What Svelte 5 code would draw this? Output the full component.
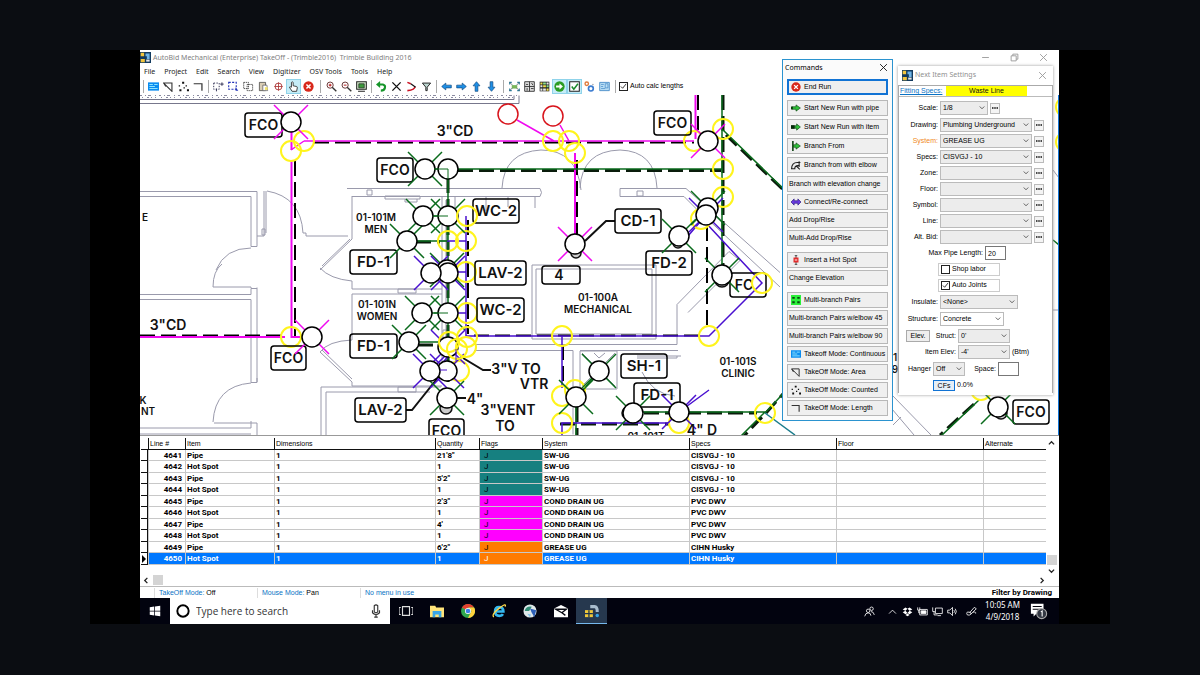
<script>
  const menus = ['File', 'Project', 'Edit', 'Search', 'View', 'Digitizer', 'OSV Tools', 'Tools', 'Help']

  // all glyphs sit on a 16 x 16 canvas
  const icons = {
    app: '<path fill="#123a5e" d="M0 0h16v16H0z"/><path fill="#f2c53d" d="M1 1h5v5H1zM1 10h6v5H1z"/><path fill="#6fb5e8" d="M8 2h6v4H8zM10 6h4v4h-4z"/><path fill="#e8e8e8" d="M9 11h5v3H9z"/>',
    cont: '<path fill="#0a8cf0" d="M0 2h16v12H0z"/><path fill="none" stroke="#8fe4ff" stroke-width="1.5" d="M2 5h5M2 8h8M9 5h5M2 11h12"/>',
    area: '<path fill="none" stroke="#333" stroke-width="1.6" d="M1 3h12v12zM1 3l3 5"/>',
    count: '<path fill="#111" d="M6 1h3v3H6zM1 6h2v2H1zM11 6h2v2h-2zM2 12h3v3H2zM8 9h2v2H8zM13 12h3v3h-3z"/>',
    len: '<path fill="none" stroke="#333" stroke-width="1.8" d="M1 4h12v10"/>',
    selAdd: '<path fill="none" stroke="#335" stroke-width="1.400" stroke-dasharray="2 2" d="M1 3h8v9H1z"/><path fill="none" stroke="#335" stroke-width="1.400" d="M13 2v5M10.500 4.500h5M5 11v4"/>',
    select: '<path fill="none" stroke="#2334b8" stroke-width="1.6" stroke-dasharray="3 2" d="M1 2h11v10H1z"/><path fill="#2334b8" d="M11 9l4 5h-4z"/>',
    copy: '<path fill="none" stroke="#444" stroke-width="1.300" stroke-dasharray="2 1" d="M1 2h7v9H1zM6 5h8v9H6z"/>',
    paste: '<path fill="#d9cdb5" stroke="#333" d="M2 2h9v12H2z"/><path fill="#fff" stroke="#555" d="M7 6h6l1 8H7z"/><path fill="#f2e36a" d="M10 9h4v4h-4z"/>',
    target: '<circle cx="8" cy="8" r="5" fill="none" stroke="#a33" stroke-width="1.3"/><path stroke="#a33" stroke-width="1.2" d="M8 2v12M2 8h12"/>',
    hand: '<path fill="#fff" stroke="#222" stroke-width="1.2" d="M5 9V2q1.500-1.500 2.500 0v5l5 1q1 0 1 2l-1 5H6L2 9q1-1 3 0z"/>',
    stop: '<circle cx="8" cy="8" r="7.500" fill="#d8281b"/><path fill="none" stroke="#fff" stroke-width="2.200" d="M5 5l6 6M11 5l-6 6"/>',
    zin: '<circle cx="6" cy="6" r="4.500" fill="#fff" stroke="#633" stroke-width="1.400"/><path fill="none" stroke="#b22" stroke-width="1.500" d="M4 6h4M6 4v4"/><path stroke="#333" stroke-width="2" d="M9 9l6 6"/>',
    zout: '<circle cx="6" cy="6" r="4.500" fill="#fff" stroke="#633" stroke-width="1.400"/><path stroke="#b22" stroke-width="1.500" d="M4 6h4"/><path stroke="#333" stroke-width="2" d="M9 9l6 6"/>',
    fit: '<path fill="#d8efd0" stroke="#222" stroke-width="1.500" d="M1 1h14v11H1zM3 15h10"/><path fill="#3c9a3c" stroke="#222" d="M4 4h8v6H4z"/>',
    undo: '<path fill="none" stroke="#16952a" stroke-width="3" d="M3 5h7q4 1 3 5-1 4-6 4"/><path fill="#16952a" d="M0 5l6-5v10z"/>',
    del: '<path stroke="#111" stroke-width="2" d="M2 2l12 12M14 2L2 14"/>',
    bend: '<path fill="none" stroke="#c12" stroke-width="2.200" d="M2 2l5 2M13 8q0 5-11 6"/><path fill="none" stroke="#111" stroke-width="1.600" d="M7 4l7 5"/>',
    filter: '<path fill="#bcd6d0" stroke="#222" stroke-width="1.400" d="M2 3h12L9 9v5H7V9z"/>',
    left: '<path fill="#1d8fe6" stroke="#124a80" d="M1 8l6-5v3h8v4H7v3z"/>',
    right: '<path fill="#1d8fe6" stroke="#124a80" d="M15 8L9 3v3H1v4h8v3z"/>',
    up: '<path fill="#1d8fe6" stroke="#124a80" d="M8 1l5 6h-3v8H6V7H3z"/>',
    down: '<path fill="#1d8fe6" stroke="#124a80" d="M8 15l5-6h-3V1H6v8H3z"/>',
    extent: '<path fill="none" stroke="#2d7d9a" stroke-width="1.600" d="M1 5V2h3M12 2h3v3M1 11v3h3M12 14h3v-3"/><path fill="#79b65a" d="M4 6h8v5H4z"/><path stroke="#345" d="M1 2l4 4M15 2l-4 4M1 14l4-4M15 14l-4-4"/>',
    calc: '<path fill="#ddd" stroke="#333" stroke-width="1.300" d="M1 1h14v14H1zM8 1v14M1 8h14M3 5h3M10 11h4M4.500 10v4M11 3l2 3"/>',
    grid: '<path fill="#222" d="M1 1h14v14H1z"/><path fill="#f3e04a" d="M2 2h3v3H2zM6 6h4v3H6zM11 11h3v3h-3z"/><path fill="#8de08a" d="M6 2h4v3H6zM11 6h3v3h-3z"/><path fill="#e8e8e8" d="M11 2h3v3h-3zM2 6h3v3H2zM6 11h4v3H6zM2 11h3v3H2z"/>',
    go: '<circle cx="8" cy="8" r="7.500" fill="#2b9c22"/><path fill="#fff" d="M3 6.500h5V3.500L13 8l-5 4.500v-3H3z"/>',
    check: '<path fill="#fff" stroke="#222" stroke-width="1.500" d="M1 1h14v14H1z"/><path fill="none" stroke="#1b8a2b" stroke-width="2.200" d="M4 8l3 4 6-8"/>',
    gears: '<circle cx="4" cy="4" r="2.500" fill="none" stroke="#e07a3c" stroke-width="2"/><circle cx="10" cy="11" r="3.500" fill="none" stroke="#3c7cd0" stroke-width="2.400"/><circle cx="13" cy="5" r="1" fill="#999"/>',
    note: '<path fill="#b9def5" stroke="#3d84c4" stroke-width="1.200" d="M1 2h14v12H1z"/><path fill="none" stroke="#3d84c4" d="M3 5h4M3 8h3M3 11h6M9 4h4v6H9z"/>',
    runPipe: '<path fill="#2fc23a" stroke="#083d0c" d="M1 6h7V3l7 5-7 5v-3H1z"/><path fill="#083d0c" d="M0 6h3v4H0z"/>',
    runItem: '<path fill="#2fc23a" stroke="#083d0c" d="M6 6h3V3l6 5-6 5v-3H6z"/><path fill="#052a08" d="M0 5h6v6H0z"/>',
    branch: '<path stroke="#083d0c" stroke-width="2.500" d="M3 0v16"/><path fill="#2fc23a" stroke="#083d0c" d="M4 6h4V3l7 5-7 5v-3H4z"/>',
    elbow: '<path fill="none" stroke="#222" stroke-width="1.700" d="M1 14q0-10 9-10h5M6 14q0-5 5-5h3M0 14h7M13 2v9M9 10l5 5"/>',
    connect: '<path fill="#6a3be0" stroke="#22107a" d="M0 8l5-5v3h6V3l5 5-5 5v-3H5v3z"/>',
    hotspot: '<path fill="none" stroke="#444" stroke-width="1.500" d="M6 1h4M6 15h4M8 1v14"/><path fill="#e02b2b" d="M4 4h8v8H4z"/><path stroke="#fff" stroke-width="1.500" d="M6 8h4"/>',
    pairs: '<path fill="#2bf03a" d="M0 0h16v16H0z"/><path fill="#0b4a10" d="M2 3h4v3H2zM10 3h4v3h-4zM2 10h4v3H2zM10 10h4v3h-4z"/>'
  }

  const toolGroups = [
    { sep: 6, items: ['cont', 'area', 'count', 'len'] },
    { sep: 5, items: ['selAdd', 'select', 'copy', 'paste', 'target', 'hand', 'stop'] },
    { sep: 8, items: ['zin', 'zout', 'fit'] },
    { sep: 5, items: ['undo', 'del', 'bend', 'filter'] },
    { sep: 5, items: ['left', 'right', 'up', 'down'] },
    { sep: 8, items: ['extent', 'calc', 'grid', 'go', 'check', 'gears', 'note'] }
  ]
  const pressed = ['hand', 'go', 'check']

  const commandGroups = [
    [['End Run', 'stop']],
    [['Start New Run with pipe', 'runPipe'], ['Start New Run with item', 'runItem'], ['Branch From', 'branch'], ['Branch from with elbow', 'elbow']],
    [['Branch with elevation change'], ['Connect/Re-connect', 'connect'], ['Add Drop/Rise'], ['Multi-Add Drop/Rise']],
    [['Insert a Hot Spot', 'hotspot'], ['Change Elevation']],
    [['Multi-branch Pairs', 'pairs'], ['Multi-branch Pairs w/elbow 45'], ['Multi-branch Pairs w/elbow 90'], ['Takeoff Mode: Continuous', 'cont'], ['TakeOff Mode: Area', 'area'], ['TakeOff Mode: Counted', 'count'], ['TakeOff Mode: Length', 'len']]
  ]

  const fields = [
    ['Drawing:', 'Plumbing Underground'],
    ['System:', 'GREASE UG'],
    ['Specs:', 'CISVGJ - 10'],
    ['Zone:', ''],
    ['Floor:', ''],
    ['Symbol:', ''],
    ['Line:', ''],
    ['Alt. Bid:', '']
  ]

  const columns = ['Line #', 'Item', 'Dimensions', 'Quantity', 'Flags', 'System', 'Specs', 'Floor', 'Alternate']
  const rows = [
    [4641, 'Pipe', "21'8\"", 'teal', 'SW-UG', 'CISVGJ - 10'],
    [4642, 'Hot Spot', '1', 'teal', 'SW-UG', 'CISVGJ - 10'],
    [4643, 'Pipe', "5'2\"", 'teal', 'SW-UG', 'CISVGJ - 10'],
    [4644, 'Hot Spot', '1', 'teal', 'SW-UG', 'CISVGJ - 10'],
    [4645, 'Pipe', "2'3\"", 'pink', 'COND DRAIN UG', 'PVC DWV'],
    [4646, 'Hot Spot', '1', 'pink', 'COND DRAIN UG', 'PVC DWV'],
    [4647, 'Pipe', "4'", 'pink', 'COND DRAIN UG', 'PVC DWV'],
    [4648, 'Hot Spot', '1', 'pink', 'COND DRAIN UG', 'PVC DWV'],
    [4649, 'Pipe', "6'2\"", 'orange', 'GREASE UG', 'CIHN Husky'],
    [4650, 'Hot Spot', '1', 'orange', 'GREASE UG', 'CIHN Husky']
  ]
  let selected = $state(4650)

  // fittings on the plan: x, y, spoke colour
  const M = '#f00af0', G = '#0a6b1c', P = '#4a10d0'
  const fittings = [
    [291, 122, M], [425, 169, G], [448, 169, ''], [423, 216, G], [448, 216, G], [407, 241, G],
    [447, 270, G], [448, 273, P], [431, 273, P], [422, 313, G], [448, 313, G], [312, 337, M], [448, 347, P],
    [409, 342, G], [447, 371, P], [430, 371, P], [447, 398, G], [708, 208, G], [706, 215, P],
    [708, 141, M], [575, 244, M], [679, 236, G], [722, 275, G], [599, 371, G], [576, 397, G],
    [633, 413, G], [679, 412, P], [998, 407, G]
  ]
  const joints = [
    [304, 141], [291, 151], [553, 141], [569, 141], [575, 153], [694, 141], [723, 129], [723, 169],
    [723, 197], [701, 219], [466, 241], [466, 272], [467, 313], [291, 337],
    [459, 371], [562, 336], [709, 336], [575, 390],
    [562, 396], [562, 423], [679, 423], [765, 413], [981, 390], [1066, 107], [1066, 142]
  ]
  // joints that lie over the fittings and tags
  const topJoints = [[762, 283], [467, 216], [448, 241], [449, 342], [457, 349], [467, 337], [466, 347]]
  const tags = [
    [245, 113, 37, 'FCO'], [377, 158, 36, 'FCO'], [654, 111, 37, 'FCO'], [271, 346, 35, 'FCO'],
    [429, 419, 35, 'FCO'], [1013, 400, 36, 'FCO'], [350, 250, 47, 'FD-1'], [350, 334, 47, 'FD-1'],
    [473, 199, 46, 'WC-2'], [477, 298, 47, 'WC-2'], [475, 261, 51, 'LAV-2'], [355, 398, 51, 'LAV-2'],
    [615, 209, 46, 'CD-1'], [646, 251, 46, 'FD-2'], [621, 354, 46, 'SH-1'], [634, 383, 46, 'FD-1']
  ]
</script>

{#snippet icon(name)}
  <svg class="icon" viewBox="0 0 16 16" aria-hidden="true">{@html icons[name]}</svg>
{/snippet}

{#snippet more(name)}
  <button class="more" aria-label="More for {name}"><svg viewBox="0 0 8 2"><path d="M0 0h2v2H0zM3 0h2v2H3zM6 0h2v2H6z" /></svg></button>
{/snippet}

<div class="page">
  <div class="frame">
    <main class="desktop">
      <header class="title">
        {@render icon('app')}
        <h1>AutoBid Mechanical (Enterprise) TakeOff - (Trimble2016)&nbsp; Trimble Building 2016</h1>
        <div class="winctl">
          <button aria-label="Minimize"><svg viewBox="0 0 8 8"><path d="M1 4h6" /></svg></button>
          <button aria-label="Restore"><svg viewBox="0 0 8 8"><path d="M1 2.500h4.500V7H1zM2.500 2.500V1H7v4.500H5.500" /></svg></button>
          <button aria-label="Close"><svg viewBox="0 0 8 8"><path d="M1 1l6 6M7 1L1 7" /></svg></button>
        </div>
      </header>
      <nav class="menu">
        {#each menus as m}<button>{m}</button>{/each}
      </nav>
      <div class="toolbar" role="toolbar" aria-label="Takeoff tools">
        {#each toolGroups as group}
          <span class="sep" style="width: {group.sep}px"></span>
          {#each group.items as name}
            <button class:on={pressed.includes(name)} aria-label={name}>{@render icon(name)}</button>
          {/each}
        {/each}
        <span class="sep last"></span>
        <label class="tick"><input type="checkbox" checked />Auto calc lengths</label>
      </div>

      <svg class="plan" viewBox="140 95 919 340" preserveAspectRatio="xMinYMin slice" role="img" aria-label="Plumbing plan">
        <!-- masonry band -->
        <g fill="none" stroke="#8a8aa0">
          <path stroke-dasharray="2 3 1 2 3 4 1 3" d="M140 95.500h378" />
          <path stroke-dasharray="1 4 2 2 1 3 1 5" d="M142 97.500h372" />
          <path stroke="#77778c" d="M140 99.500h374M140 103.500h379v-8M514 99.500v-4" />
        </g>

        <!-- walls and doors -->
        <g class="wall">
          <path d="M140 191.500h117v55h-6v-50H140M140 294.500h111v-6h6M251 288v-1h-38M251 299.500H140M251 299.500v83h6v-95M251 421v7H140M257 435v-12h-43M140 434h111M257 382v-4" />
          <path d="M264 191v45h-7M266 191v42M262 229h3v6h-3zM216 270q9-22 35-22M213 287q0-16 9-23M251 383q-36 3-38 39M267 191q34 6 36 42h3v3h42" />
          <path d="M347 188.500h193q3 4 0 8H352M352 196v43l-32 31M350 239l-28 27M385 196h35v3h-35zM367 190h5v5h-5zM405 199v3h12v-3M320 268q10 11 32 13v8h90M352 294h90M352 294v46q-24 1-32 12l32 30v4h90M322 350l30 29M398 289h18v4h-18zM398 387h18v5h-18zM321 435v-48h120M326 435v-43h104M442 196v178M446 200v170M443 210h4v12h-4zM443 330h4v12h-4z" />
          <path d="M455 196v15M486 197v14M508 197v10M535 197v11M502 188q2-36 39-38 36 0 40 40M580 188q2-37 40-38 35 1 37 38M620 188.500h66l94 84M620 188.500v8h64l16 16M637 191h6v5h-6z" />
          <path d="M532 265h124v74H532zM536 269h116v65H536zM474 344.500h203v-40l52-53 11 9-52 52M474 350.500h99v84M580 350.500h98M580 351h37v38h-37zM582 353l33 33M615 353l-33 33M594 353l5 5 6-5M637 356h44M637 358h40v-2M642 372q10 22 33 24M700 212l80 75" />
          <path d="M892 395l39 40M892 409l22 26M901 417l-8 8M1046 96v240M1050 100v294M1053 310h6M1053 170l6 8" />
        </g>

        <!-- hidden pipe runs, drawn as dashes -->
        <g class="dash">
          <path d="M314 142.500h380M295 161v175M140 335.500h142M698 95v35M577 160v75M707 226v100M474 335.500h230M563 345v42" />
          <path class="heavy" d="M458 170.500h263M723 95v190M726 135l70 67M448 178v220M644 413h113M416 242h24M418 345h20M560 424h110M577 407v28M974 404l-34 31M790 386l-24 27-22 23" />
          <path d="M468 220v114" />
        </g>

        <g fill="none" stroke-width="1.500">
          <path stroke={M} stroke-width="2" d="M291.500 130v20M291.500 160v177h14M140 337h145M575 153v84M695.500 95v44" />
          <path stroke={M} d="M304 141h390M517 120l37 21M560 125l9 16M291 150l13-9" />
          <path stroke={G} d="M425 169h23v200M448 169h275M722 95v190M723 130l73 71M407 241h40M423 216h25M422 313h26M418 342h30M643 412h122l-26 26M765 413l28-30M577 397l22-26M576 405v30M979 400l-38 36M1053 60l8 6M1053 240l6 5" />
          <path stroke={P} d="M447 241h19M431 272h35M448 313h18M466 216v120h243l53-53-56-60M562 336v52M562 435v-12h107M706 215l-24 28M455 349l-20 22M679 412l30-22" />
          <path stroke="#1a7c8c" d="M765 413l30 22" />
          <path stroke="#111" stroke-width="2" d="M585 241l21-20h9M406 410h6l28-35M466 398h-9M491 370h-8l-20-12" />
        </g>

        {#each joints as [x, y]}
          <circle class="joint" cx={x} cy={y} r="10" />
        {/each}

        {#each tags as [x, y, w, text]}
          <rect class="tag" {x} {y} width={w} height="24" rx="3" />
          <text class="cad" class:wide={w > 40} x={x + w / 2} y={y + 17}>{text}</text>
        {/each}
        <rect class="tag" x="542" y="266" width="38" height="18" rx="3" />
        <text class="cad" x="559" y="280">4</text>
        <rect class="tag" x="730" y="273" width="36" height="24" rx="3" />
        <text class="cad" x="744" y="290">FC</text>

        <circle class="drop" cx="576" cy="253" r="5" />
        <circle class="drop" cx="678" cy="243" r="5" />
        <circle class="drop" cx="722" cy="280" r="7" />
        <circle class="drop" cx="446" cy="408" r="6" />
        <circle class="drop" cx="628" cy="413" r="6" />
        <circle class="drop" cx="1001" cy="413" r="6" />
        {#each fittings as [x, y, colour]}
          {#if colour}
            <path stroke={colour} stroke-width="1.500" d="M{x - 17} {y - 17}l34 34M{x + 17} {y - 17}l-34 34" />
          {/if}
        {/each}
        {#each fittings as [x, y]}
          <circle class="fitting" cx={x} cy={y} r="10" />
        {/each}
        {#each topJoints as [x, y]}
          <circle class="joint" cx={x} cy={y} r="10" />
        {/each}
        <path fill="none" stroke={G} d="M434 169h14v10M433 216h15M434 313h14M447 232v9h-8" />
        <path fill="none" stroke={P} d="M440 370h7M456 361v-12" />
        <circle class="riser" cx="508" cy="114" r="10" />
        <circle class="riser" cx="553" cy="116" r="10" />

        <g class="cad">
          <text x="455" y="136">3"CD</text>
          <text x="168" y="330">3"CD</text>
          <text x="516" y="374">3"V TO</text>
          <text x="534" y="389">VTR</text>
          <text x="475" y="404">4"</text>
          <text x="508" y="415">3"VENT</text>
          <text x="505" y="431">TO</text>
          <text x="702" y="435">4" D</text>
        </g>
        <g class="room">
          <text x="376" y="221">01-101M</text>
          <text x="376" y="233">MEN</text>
          <text x="377" y="308">01-101N</text>
          <text x="377" y="320">WOMEN</text>
          <text x="598" y="301">01-100A</text>
          <text x="598" y="313">MECHANICAL</text>
          <text x="738" y="365">01-101S</text>
          <text x="738" y="377">CLINIC</text>
          <text x="646" y="440">01-101T</text>
          <text x="145" y="221">E</text>
          <text x="143" y="404">K</text>
          <text x="148" y="415">NT</text>
          <text x="895" y="361">1</text>
          <text x="895" y="373">9</text>
        </g>
        <path stroke="#1173d4" d="M1058.500 95v340" />
      </svg>

      <section class="grid">
        <table>
          <thead>
            <tr>
              <th class="mark"></th>
              {#each columns as c}<th class={c.toLowerCase().replace(' #', '')}>{c}</th>{/each}
            </tr>
          </thead>
          <tbody>
            {#each rows as [id, item, qty, flag, system, specs]}
              <tr class:selected={id === selected} onclick={() => (selected = id)}>
                <td class="mark">{#if id === selected}<svg viewBox="0 0 4 8"><path d="M0 0l4 4-4 4z" /></svg>{/if}</td>
                <td class="num">{id}</td>
                <td>{item}</td>
                <td>1</td>
                <td>{qty}</td>
                <td class="flag {flag}">J</td>
                <td>{system}</td>
                <td>{specs}</td>
                <td></td>
                <td></td>
              </tr>
            {/each}
          </tbody>
        </table>
        <div class="vscroll">
          <svg viewBox="0 0 8 8"><path d="M1 5l3-3 3 3" /></svg>
          <span class="thumb"></span>
          <svg viewBox="0 0 8 8"><path d="M1 3l3 3 3-3" /></svg>
        </div>
      </section>
      <div class="hscroll">
        <svg viewBox="0 0 8 8"><path d="M5 1L2 4l3 3" /></svg>
        <span class="thumb"></span>
        <svg class="end" viewBox="0 0 8 8"><path d="M3 1l3 3-3 3" /></svg>
      </div>
      <footer class="status">
        <span><i>TakeOff Mode:</i> Off</span>
        <span><i>Mouse Mode:</i> Pan</span>
        <span><i>No menu in use</i></span>
        <b>Filter by Drawing</b>
      </footer>

      <div class="taskbar">
        <button class="start" aria-label="Start"><svg viewBox="0 0 16 16"><path fill="#fff" d="M1 3l6-1v5.500H1zM8 2l7-1v6.500H8zM1 8.500h6V14l-6-1zM8 8.500h7V15l-7-1z" /></svg></button>
        <label class="search">
          <svg viewBox="0 0 16 16"><circle cx="8" cy="8" r="6.500" fill="none" stroke="#000" stroke-width="2.200" /></svg>
          <input type="text" placeholder="Type here to search" aria-label="Type here to search" />
          <svg viewBox="0 0 16 16"><path fill="none" stroke="#333" stroke-width="1.300" d="M6 2q2-2 4 0v7q-2 2-4 0zM4 7v3q4 4 8 0V7M8 12v3M6 15h4" /></svg>
        </label>
        <button aria-label="Task view"><svg viewBox="0 0 16 16"><path fill="none" stroke="#ddd" stroke-width="1.300" d="M4 3h8v10H4zM2 4H0v8h2M14 4h2v8h-2" /></svg></button>
        <button aria-label="File Explorer"><svg viewBox="0 0 16 16"><path fill="#ffe47a" d="M0 2h6l1 2h9v11H0z" /><path fill="#3aa7e8" d="M3 8h10v7h-3v-3H6v3H3z" /></svg></button>
        <button aria-label="Chrome"><svg viewBox="0 0 16 16"><circle cx="8" cy="8" r="8" fill="#2fa84f" /><path fill="#e2402f" d="M1 4a8 8 0 0114 0H8v4z" /><path fill="#ffd23c" d="M15 4a8 8 0 01-7 12l4-8-4-4z" /><circle cx="8" cy="8" r="3.500" fill="#fff" /><circle cx="8" cy="8" r="2.700" fill="#3b7fe8" /></svg></button>
        <button aria-label="Internet Explorer"><svg viewBox="0 0 16 16"><path fill="none" stroke="#35b8f0" stroke-width="3" d="M4 8.500h9q0-5-5-5-4.500 0-4.500 5t5 5q3 0 4-2" /><path fill="none" stroke="#ffd84a" stroke-width="1.500" d="M2 15Q-1 12 8 5t7-2" /></svg></button>
        <button aria-label="Browser"><svg viewBox="0 0 16 16"><circle cx="8" cy="8" r="7.500" fill="#dfe8ea" /><path fill="#2f8a74" d="M2 8q1-6 8-5l-3 5z" /><path fill="#2d5fb8" d="M8 5l7 2-2 8-3-5z" /><path fill="#7fc4ef" d="M5 11l4 1-1 3z" /></svg></button>
        <button aria-label="Mail"><svg viewBox="0 0 16 16"><path fill="#fff" d="M0 5l8-4 8 4v10H0z" /><path fill="none" stroke="#05060f" stroke-width="1.500" d="M2 6h12l-5 4zM9 10l4 3" /></svg></button>
        <button class="active" aria-label="AutoBid"><svg viewBox="0 0 16 16"><path fill="#f0c83a" d="M0 7h9v8H0z" /><path stroke="#1d3550" stroke-width="1.500" d="M4.500 7v8M0 11h9" /><path fill="none" stroke="#a8bccd" stroke-width="3.500" d="M6 3h5q3 0 3 6" /><circle cx="14" cy="13" r="2" fill="#34a5e8" /></svg></button>
        <div class="tray">
          <svg class="people" viewBox="0 0 16 16"><circle cx="6" cy="7" r="2.500" /><circle cx="11" cy="4" r="2.500" /><path d="M1 15q1-5 5-5t4 4M10 8q4 0 5 5" /></svg>
          <svg viewBox="0 0 16 16"><path d="M3 11l5-5 5 5" /></svg>
          <svg viewBox="0 0 16 16"><path fill="#fff" stroke="none" d="M5 2l3 2-3 3-4-2zM11 2l4 3-4 2-3-3zM5 7l3 3-3 2-4-3zM11 7l4 2-4 3-3-2zM5 13l3-2 3 2-3 2z" /></svg>
          <svg viewBox="0 0 16 16"><path d="M4 5h11v8H4zM1 2v4h3V2M2.500 6v4H4" /><path fill="#fff" d="M6 7h7v4H6z" /></svg>
          <svg viewBox="0 0 16 16"><path d="M5 3h10v8H5zM8 14h5M1 2v6h3M3 8v5h5" /></svg>
          <svg viewBox="0 0 16 16"><path d="M1 6h3l4-4v12l-4-4H1zM10 6q2 2 0 4M12 4q3 4 0 8" /></svg>
          <svg class="pen" viewBox="0 0 16 16"><path d="M2 13q-3-5 3-4 4 1 2 3T2 13M5 10L12 2l3 2-8 8M10 9q5-1 4 2" /></svg>
          <time><span>10:05 AM</span><span>4/9/2018</span></time>
          <svg class="notice" viewBox="0 0 20 20"><path fill="#fff" stroke="none" d="M1 2h14v11H7l-3 3v-3H1z" /><path stroke="#05060f" d="M3 5h10M3 8h10" /><circle cx="13" cy="13" r="5.500" fill="#333843" stroke="#aaa" /><path d="M12 11l1.500-1v6" /></svg>
        </div>
      </div>

      <section class="window commands">
        <h2>Commands <button aria-label="Close commands"><svg viewBox="0 0 8 8"><path d="M1 1l6 6M7 1L1 7" /></svg></button></h2>
        {#each commandGroups as group}
          <div class="group">
            {#each group as [label, name]}
              <button class="cmd" class:primary={label === 'End Run'}>
                {#if name}{@render icon(name)}{/if}{label}
              </button>
            {/each}
          </div>
        {/each}
      </section>

      <section class="window settings">
        <h2>{@render icon('app')} Next Item Settings <button aria-label="Close settings"><svg viewBox="0 0 8 8"><path d="M1 1l6 6M7 1L1 7" /></svg></button></h2>
        <div class="body">
          <div class="spec"><a href="#specs">Fitting Specs:</a><mark>Waste Line</mark></div>
          <div class="row scale">
            <label for="scale">Scale:</label>
            <select id="scale"><option>1/8</option></select>
            {@render more('scale')}
          </div>
          {#each fields as [label, value], i}
            <div class="row">
              <label for="f{i}" class:warn={label === 'System:'}>{label}</label>
              <select id="f{i}" class="full"><option>{value}</option></select>
              {@render more(label)}
            </div>
          {/each}
          <div class="row"><label class="long" for="maxlen">Max Pipe Length:</label><input id="maxlen" type="text" value="20" /></div>
          <div class="row"><label class="tick boxed"><input type="checkbox" />Shop labor</label></div>
          <div class="row"><label class="tick boxed"><input type="checkbox" checked />Auto Joints</label></div>
          <div class="row tall"><label for="ins">Insulate:</label><select id="ins" class="mid"><option>&lt;None&gt;</option></select></div>
          <div class="row tall"><label for="struct">Structure:</label><select id="struct" class="plain"><option>Concrete</option></select></div>
          <div class="row tall"><button class="elev">Elev.</button><label class="half" for="selev">Struct:</label><select id="selev" class="short"><option>0'</option></select></div>
          <div class="row"><label class="ielev" for="ielev">Item Elev:</label><select id="ielev" class="short"><option>-4'</option></select><span>(Btm)</span></div>
          <div class="row tall"><label class="hang" for="hang">Hanger</label><select id="hang" class="tiny"><option>Off</option></select><label for="space">Space:</label><input id="space" type="text" /></div>
          <div class="row cf"><button>CFs</button><span>0.0%</span></div>
        </div>
      </section>
    </main>
  </div>
</div>

<style>
  :global(body) { background: #0b0d12; }
  .page { min-height: 100vh; box-sizing: border-box; padding: 50px 90px; font: 7px/10px "Liberation Sans", Arial, sans-serif; color: #000; }
  .frame { background: #000; padding: 0 51px 0 50px; }
  .desktop { position: relative; background: #fff; display: flex; flex-direction: column; }
  button, input, select { font: inherit; color: inherit; margin: 0; padding: 0; border: 0; border-radius: 0; background: none; box-sizing: border-box; }
  h1, h2 { margin: 0; font-size: inherit; font-weight: normal; }
  svg { display: block; flex: none; }
  .icon { width: 11px; height: 11px; }

  .title { display: flex; align-items: center; gap: 2px; height: 15px; font-family: "Noto Sans", "Open Sans", sans-serif; color: #808080; }
  .winctl { margin-left: auto; margin-right: 11px; display: flex; gap: 20px; }
  .winctl svg, h2 button svg { width: 9px; height: 9px; fill: none; stroke: #999; stroke-width: 0.8; }
  .menu { display: flex; gap: 9px; height: 13px; padding-left: 4px; align-items: center; font-family: "Noto Sans", "Open Sans", sans-serif; color: #222; }
  .toolbar { display: flex; align-items: center; height: 17px; padding-bottom: 1px; box-sizing: border-box; }
  .toolbar button { width: 15px; height: 15px; display: flex; align-items: center; justify-content: center; }
  .toolbar .on { background: #c5ecf7; box-shadow: inset 0 0 0 1px #8fd3ea; }
  .sep { height: 13px; background: linear-gradient(#aaa, #aaa) center / 1px 100% no-repeat; }
  .sep.last { width: 7px; }
  .tick { display: flex; align-items: center; gap: 2px; }
  .tick input { appearance: none; width: 9px; height: 9px; border: 1px solid #222; background: #fff; }
  .tick input:checked { background: url("data:image/svg+xml,%3Csvg xmlns='http://www.w3.org/2000/svg' viewBox='0 0 8 8'%3E%3Cpath d='M1 4l2 2 4-5' fill='none' stroke='%23222'/%3E%3C/svg%3E") center / 7px no-repeat #fff; }

  .plan { width: 100%; height: 340px; background: #fff; }
  .wall { fill: none; stroke: #9a9aac; stroke-width: 1; }
  .dash { fill: none; stroke: #000; stroke-width: 2; stroke-dasharray: 15 6; }
  .dash .heavy { stroke-width: 3; stroke: #0a1c0c; }
  .joint { fill: none; stroke: #fff41c; stroke-width: 2; }
  .fitting { fill: #fff; stroke: #000; stroke-width: 1.5; }
  .drop { fill: #ccc; stroke: #111; stroke-width: 1.5; }
  .riser { fill: none; stroke: #d8141c; stroke-width: 1.5; }
  .tag { fill: none; stroke: #000; stroke-width: 1.5; }
  .cad { font: 600 14px Inter, sans-serif; text-anchor: middle; fill: #111; }
  .cad.wide { font-size: 15px; }
  .room { font: 600 10px Inter, sans-serif; text-anchor: middle; fill: #111; }

  .grid { display: flex; border-top: 1px solid #999; padding: 2px 2px 0 1px; }
  table { flex: 1; min-width: 0; table-layout: fixed; border-collapse: separate; border-spacing: 0; font: bold 8px/10px Roboto, sans-serif; }
  th { height: 12px; padding: 0 0 0 1px; box-sizing: border-box; text-align: left; font: 7px/10px "Liberation Sans", sans-serif; border-left: 1px solid #111; border-bottom: 1px solid #111; }
  td { height: 11px; padding: 0 0 0 1px; box-sizing: border-box; line-height: 9px; border-left: 1px solid #c8c8c8; border-bottom: 1px solid #c8c8c8; white-space: nowrap; }
  tr:nth-child(even) td { height: 12px; }
  th.mark { width: 7px; border-left: 0; }
  td.mark { border-left: 0; border-bottom-color: #111; border-right: 1px solid #111; }
  td.mark svg { width: 4px; height: 8px; fill: #000; }
  .line { width: 37px; }
  .item { width: 89px; }
  .dimensions { width: 161px; }
  .quantity { width: 44px; }
  .flags { width: 63px; }
  .system, .specs, .floor { width: 147px; }
  .num { text-align: right; padding-right: 3px; }
  .flag { padding-left: 4px; font-weight: normal; }
  .teal { background: #168080; }
  .pink { background: #ff00ff; }
  .orange { background: #ff7b00; }
  .selected td:not(.flag, .mark) { background: #0078ff; }
  .selected td { color: #fff; }
  .vscroll { width: 11px; padding-top: 2px; display: flex; flex-direction: column; align-items: center; }
  .vscroll svg, .hscroll svg { width: 7px; height: 7px; fill: none; stroke: #222; stroke-width: 1.5; }
  .thumb { width: 10px; height: 10px; background: #d4d4d4; }
  .vscroll .thumb { margin-top: auto; }
  .vscroll svg:last-child { margin-bottom: -9px; margin-top: 2px; }
  .hscroll { display: flex; align-items: center; gap: 3px; height: 12px; margin-top: 9px; padding: 0 14px 0 3px; }
  .hscroll .end { margin-left: auto; }
  .status { display: flex; align-items: center; height: 11px; border-top: 1px solid #bbb; padding: 0 7px 0 14px; }
  .status span { width: 98px; padding-left: 4px; border-left: 1px solid #ddd; }
  .status i { font-style: normal; color: #0a72c4; }
  .status b { margin-left: auto; font: bold 8px/10px Roboto, sans-serif; }

  .taskbar { display: flex; height: 26px; background: #02030f; color: #fff; }
  .taskbar > button { width: 31px; display: flex; align-items: center; justify-content: center; }
  .taskbar > button svg { width: 14px; height: 14px; }
  .taskbar .start { width: 30px; }
  .taskbar .start svg { width: 12px; height: 12px; }
  .taskbar .active { background: #26384e; border-bottom: 1px solid #76b9ed; }
  .search { width: 220px; box-sizing: border-box; display: flex; align-items: center; gap: 6px; padding: 0 7px 0 6px; background: #fff; }
  .search svg { width: 14px; height: 14px; }
  .search input { flex: 1; min-width: 0; font: 10px/14px "Open Sans", sans-serif; }
  .search input::placeholder { color: #333; opacity: 1; }
  .tray { margin-left: auto; display: flex; align-items: center; gap: 4px; padding-right: 11px; }
  .tray svg { width: 11px; height: 11px; fill: none; stroke: #fff; stroke-width: 1.2; }
  .tray .people { margin-right: 8px; }
  .tray .pen { margin-left: 4px; }
  .tray time { display: flex; flex-direction: column; align-items: center; margin: 0 6px 0 4px; font: 8px/12px "Noto Sans", sans-serif; }
  .tray .notice { width: 18px; height: 18px; }

  /* floating tool windows */
  .window { position: absolute; box-sizing: border-box; background: #fff; }
  .window h2 { display: flex; align-items: center; gap: 2px; font-family: "Noto Sans", "Open Sans", sans-serif; }
  .window h2 button { margin-left: auto; }
  .commands { top: 9px; right: 166px; width: 111px; height: 362px; border: 1px solid #2b93cf; padding: 0 4px; background: #fbfbfb; }
  .commands h2 { height: 15px; margin: 0 0 4px -2px; font-size: 7px; }
  .commands h2 button svg { stroke: #111; }
  .group { display: flex; flex-direction: column; gap: 2px; margin-bottom: 6px; }
  .group:nth-of-type(1) { margin-bottom: 5px; }
  .group:nth-of-type(2) { gap: 3px; margin-bottom: 3px; }
  .cmd { height: 16px; display: flex; align-items: center; gap: 3px; padding: 0 1px; border: 1px solid #b8b8b8; background: #efefef; white-space: nowrap; }
  .cmd .icon { margin-left: 2px; width: 10px; height: 10px; }
  .cmd.primary { border: 2px solid #1173d4; padding: 0; }
  .settings { top: 16px; right: 6px; width: 155px; height: 329px; box-shadow: 0 0 3px #999; }
  .settings h2 { height: 18px; padding: 0 6px 0 4px; font-size: 7px; color: #909090; }
  .body { border: 1px solid #aaa; border-width: 1px 1px 0 1px; margin-top: 1px; }
  .spec { display: flex; gap: 3px; height: 10px; border-bottom: 1px solid #bbb; }
  .spec a { color: #0a72c4; padding-left: 1px; width: 43px; white-space: nowrap; }
  mark { width: 81px; background: #ff0; text-align: center; color: #111; }
  .row { display: flex; align-items: center; gap: 2px; height: 16px; white-space: nowrap; }
  .row label { width: 39px; text-align: right; }
  .row .warn { color: #f08a1c; }
  .scale { height: 18px; margin-top: 2px; }
  select { appearance: none; height: 14px; width: 48px; padding: 0 2px; border: 1px solid #bbb; background: url("data:image/svg+xml,%3Csvg xmlns='http://www.w3.org/2000/svg' viewBox='0 0 8 8'%3E%3Cpath d='M1 2l3 3 3-3' fill='none' stroke='%23333'/%3E%3C/svg%3E") right 2px center / 6px no-repeat #ececec; }
  select.full { width: 92px; }
  select.mid { width: 78px; }
  select.plain { width: 64px; background-color: #fff; }
  select.short { width: 52px; }
  select.tiny { width: 32px; }
  .more { width: 10px; height: 11px; border: 1px solid #bbb; background: #f4f4f4; display: flex; align-items: center; justify-content: center; }
  .more svg { width: 6px; height: 2px; fill: #111; }
  .row input[type='text'] { width: 21px; height: 14px; padding: 0 2px; border: 1px solid #777; background: #fff; }
  .row label.long { width: 84px; }
  .row .boxed { box-sizing: border-box; width: 62px; height: 13px; margin-left: 39px; padding-left: 2px; border: 1px solid #ccc; }
  .row.tall { height: 17px; }
  .elev { width: 24px; height: 12px; margin-left: 7px; border: 1px solid #aaa; background: #eee; }
  .row label.half { width: 24px; }
  .row label.ielev { width: 57px; }
  .row label.hang { width: 32px; }
  .row label.hang ~ label { width: 29px; }
  .cf button { width: 22px; height: 11px; margin-left: 34px; border: 1px solid #1173d4; background: #e5eef7; }
</style>
